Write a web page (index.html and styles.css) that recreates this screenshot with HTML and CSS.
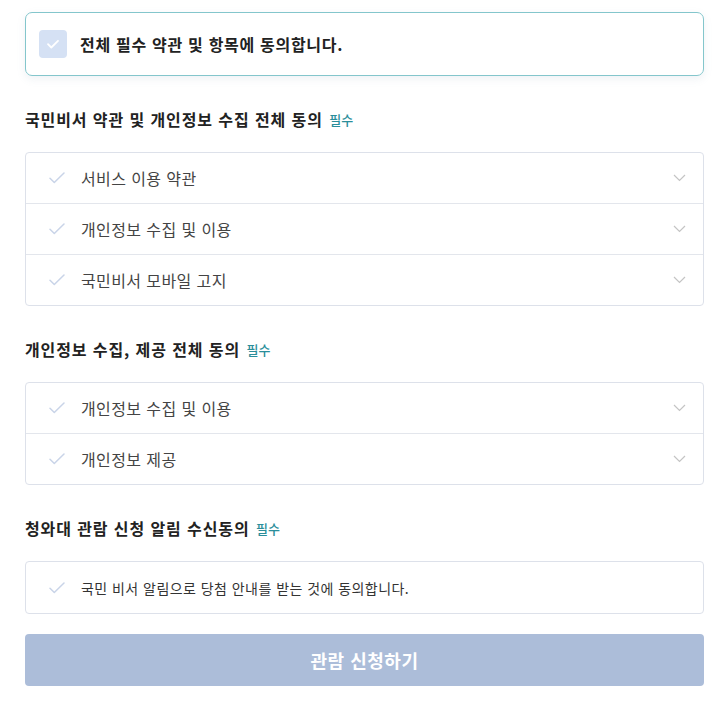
FILE: index.html
```html
<!DOCTYPE html>
<html lang="ko">
<head>
<meta charset="utf-8">
<link rel="stylesheet" href="styles.css">
</head>
<body>
<div class="page">
  <div class="all-agree">
    <span class="checkbox">
      <svg width="16" height="16" viewBox="0 0 16 16"><path d="M3 8.2l3.3 3.3L13 4.8" fill="none" stroke="#fff" stroke-width="1.8" stroke-linecap="round" stroke-linejoin="round"/></svg>
    </span>
    <span class="all-text">전체 필수 약관 및 항목에 동의합니다.</span>
  </div>

  <h2 class="sec-title">국민비서 약관 및 개인정보 수집 전체 동의 <span class="req">필수</span></h2>
  <div class="list">
    <div class="row"><svg class="chk" width="16" height="12" viewBox="0 0 16 12"><path d="M1 6.2l4.3 4.3L15 1" fill="none" stroke="#c9d4e8" stroke-width="1.5" stroke-linecap="round" stroke-linejoin="round"/></svg><span class="label">서비스 이용 약관</span><svg class="chev" width="13" height="8" viewBox="0 0 13 8"><path d="M1 1l5.5 5.5L12 1" fill="none" stroke="#c4c4c4" stroke-width="1.2"/></svg></div>
    <div class="row"><svg class="chk" width="16" height="12" viewBox="0 0 16 12"><path d="M1 6.2l4.3 4.3L15 1" fill="none" stroke="#c9d4e8" stroke-width="1.5" stroke-linecap="round" stroke-linejoin="round"/></svg><span class="label">개인정보 수집 및 이용</span><svg class="chev" width="13" height="8" viewBox="0 0 13 8"><path d="M1 1l5.5 5.5L12 1" fill="none" stroke="#c4c4c4" stroke-width="1.2"/></svg></div>
    <div class="row"><svg class="chk" width="16" height="12" viewBox="0 0 16 12"><path d="M1 6.2l4.3 4.3L15 1" fill="none" stroke="#c9d4e8" stroke-width="1.5" stroke-linecap="round" stroke-linejoin="round"/></svg><span class="label">국민비서 모바일 고지</span><svg class="chev" width="13" height="8" viewBox="0 0 13 8"><path d="M1 1l5.5 5.5L12 1" fill="none" stroke="#c4c4c4" stroke-width="1.2"/></svg></div>
  </div>

  <h2 class="sec-title">개인정보 수집, 제공 전체 동의 <span class="req">필수</span></h2>
  <div class="list">
    <div class="row"><svg class="chk" width="16" height="12" viewBox="0 0 16 12"><path d="M1 6.2l4.3 4.3L15 1" fill="none" stroke="#c9d4e8" stroke-width="1.5" stroke-linecap="round" stroke-linejoin="round"/></svg><span class="label">개인정보 수집 및 이용</span><svg class="chev" width="13" height="8" viewBox="0 0 13 8"><path d="M1 1l5.5 5.5L12 1" fill="none" stroke="#c4c4c4" stroke-width="1.2"/></svg></div>
    <div class="row"><svg class="chk" width="16" height="12" viewBox="0 0 16 12"><path d="M1 6.2l4.3 4.3L15 1" fill="none" stroke="#c9d4e8" stroke-width="1.5" stroke-linecap="round" stroke-linejoin="round"/></svg><span class="label">개인정보 제공</span><svg class="chev" width="13" height="8" viewBox="0 0 13 8"><path d="M1 1l5.5 5.5L12 1" fill="none" stroke="#c4c4c4" stroke-width="1.2"/></svg></div>
  </div>

  <h2 class="sec-title">청와대 관람 신청 알림 수신동의 <span class="req">필수</span></h2>
  <div class="list">
    <div class="row row-single"><svg class="chk" width="16" height="12" viewBox="0 0 16 12"><path d="M1 6.2l4.3 4.3L15 1" fill="none" stroke="#c9d4e8" stroke-width="1.5" stroke-linecap="round" stroke-linejoin="round"/></svg><span class="label small">국민 비서 알림으로 당첨 안내를 받는 것에 동의합니다.</span></div>
  </div>

  <button class="submit" type="button">관람 신청하기</button>
</div>
</body>
</html>
```

FILE: styles.css
```css
* { box-sizing: border-box; }
html, body { margin: 0; padding: 0; background: #fff; }
body {
  font-family: "Noto Sans CJK KR", "Noto Sans", sans-serif;
  color: #222;
}
.page {
  padding: 12px 19px 0 25px;
  display: flex;
  flex-direction: column;
}
.all-agree {
  height: 64px;
  border: 1px solid #84c6cc;
  border-radius: 7px;
  box-shadow: 0 3px 8px rgba(120, 150, 170, 0.12);
  display: flex;
  align-items: center;
  padding-left: 13px;
  gap: 13px;
}
.checkbox {
  width: 28px;
  height: 28px;
  border-radius: 4px;
  background: #d5e1f4;
  display: flex;
  align-items: center;
  justify-content: center;
}
.all-text {
  font-size: 16px;
  font-weight: 700;
  letter-spacing: 0.7px;
  color: #222;
  line-height: 20px;
}
.sec-title {
  margin: 32px 0 22px;
  height: 22px;
  display: flex;
  align-items: center;
  white-space: pre;
  font-size: 16px;
  font-weight: 700;
  letter-spacing: 0.9px;
  line-height: 22px;
  color: #222;
}
.req {
  font-size: 13px;
  font-weight: 500;
  letter-spacing: 0;
  line-height: 22px;
  color: #2a8e9a;
  margin-left: 1px;
  padding-top: 1px;
}
.list {
  border: 1px solid #dde1ea;
  border-radius: 4px;
}
.row {
  height: 50px;
  display: flex;
  align-items: center;
  padding: 0 17px 0 23px;
}
.row + .row { height: 51px; border-top: 1px solid #e3e6ec; }
.row-single { height: 51px; }
.chk { flex: none; margin-right: 16px; }
.label {
  flex: 1;
  font-size: 16px;
  letter-spacing: 0.4px;
  color: #444;
  line-height: 20px;
}
.label.small { font-size: 14px; letter-spacing: 0.45px; color: #333; }
.chev { flex: none; }
.submit {
  margin-top: 20px;
  height: 52px;
  border: none;
  border-radius: 4px;
  background: #acbdd9;
  color: #fff;
  font-family: "Noto Sans CJK KR", "Noto Sans", sans-serif;
  font-size: 18px;
  font-weight: 700;
  letter-spacing: 0.5px;
  width: 100%;
}
```
